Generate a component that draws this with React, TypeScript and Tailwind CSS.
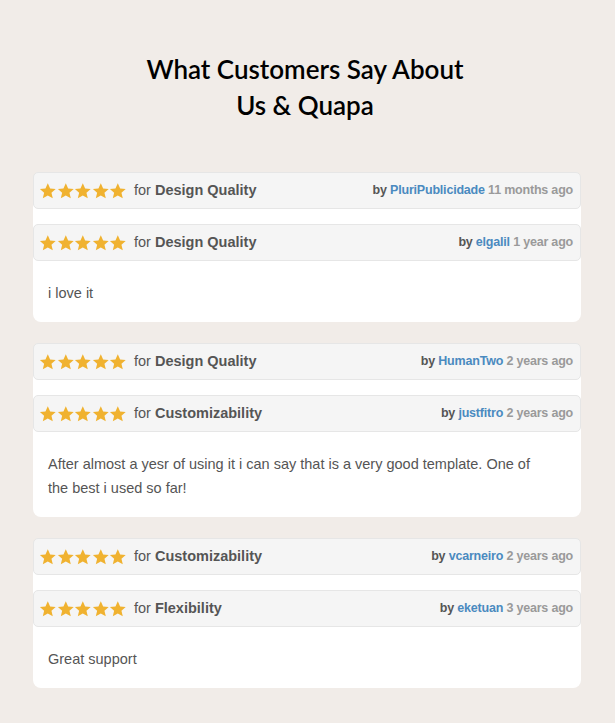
const reviews = [
  {
    top: { category: "Design Quality", author: "PluriPublicidade", time: "11 months ago" },
    bottom: { category: "Design Quality", author: "elgalil", time: "1 year ago" },
    text: ["i love it"],
  },
  {
    top: { category: "Design Quality", author: "HumanTwo", time: "2 years ago" },
    bottom: { category: "Customizability", author: "justfitro", time: "2 years ago" },
    text: [
      "After almost a yesr of using it i can say that is a very good template. One of",
      "the best i used so far!",
    ],
  },
  {
    top: { category: "Customizability", author: "vcarneiro", time: "2 years ago" },
    bottom: { category: "Flexibility", author: "eketuan", time: "3 years ago" },
    text: ["Great support"],
  },
];

function Star() {
  return (
    <svg viewBox="0 0 24 24" className="w-[17.6px] h-[18px]" fill="#f0b230">
      <path d="M12 1.5l3.2 7 7.6.7-5.8 5.1 1.8 7.6L12 18l-6.8 3.9 1.8-7.6-5.8-5.1 7.6-.7z" />
    </svg>
  );
}

function Header({ row }: { row: { category: string; author: string; time: string } }) {
  return (
    <div className="flex items-center justify-between h-[37px] pl-[5px] pr-[7px] bg-[#f5f5f5] border border-[#e6e6e6] rounded-[5px] text-[14.5px]">
      <div className="flex items-center">
        <div className="flex items-center">
          {[0, 1, 2, 3, 4].map((i) => (
            <Star key={i} />
          ))}
        </div>
        <span className="ml-[7px] text-[#555]">
          for <span className="font-bold text-[#555]">{row.category}</span>
        </span>
      </div>
      <span className="text-[12.5px] font-bold tracking-[-0.2px]">
        <span className="text-[#555]">by </span>
        <span className="text-[#4a8ac0]">{row.author}</span>
        <span className="text-[#9a9a9a]"> {row.time}</span>
      </span>
    </div>
  );
}

export default function App() {
  return (
    <div className="min-h-[723px] bg-[#f1ece8] pt-[51px] pb-[30px] pl-[33px] pr-[34px] font-['Liberation_Sans',Arial,sans-serif]">
      <h1 className="text-center text-[26px] leading-[36px] font-semibold text-black font-['Lato','Open_Sans',sans-serif] pr-[4px]">
        What Customers Say About
        <br />
        Us &amp; Quapa
      </h1>
      <div className="mt-[49px] flex flex-col gap-[21px]">
        {reviews.map((review) => (
          <div key={review.top.author} className="bg-white rounded-[8px] w-[548px]">
            <Header row={review.top} />
            <div className="h-[15px]" />
            <Header row={review.bottom} />
            <div className="px-[15px] pt-[20px] pb-[17px] text-[14.5px] leading-[24px] text-[#555]">
              {review.text.map((line) => (
                <p key={line}>{line}</p>
              ))}
            </div>
          </div>
        ))}
      </div>
    </div>
  );
}
